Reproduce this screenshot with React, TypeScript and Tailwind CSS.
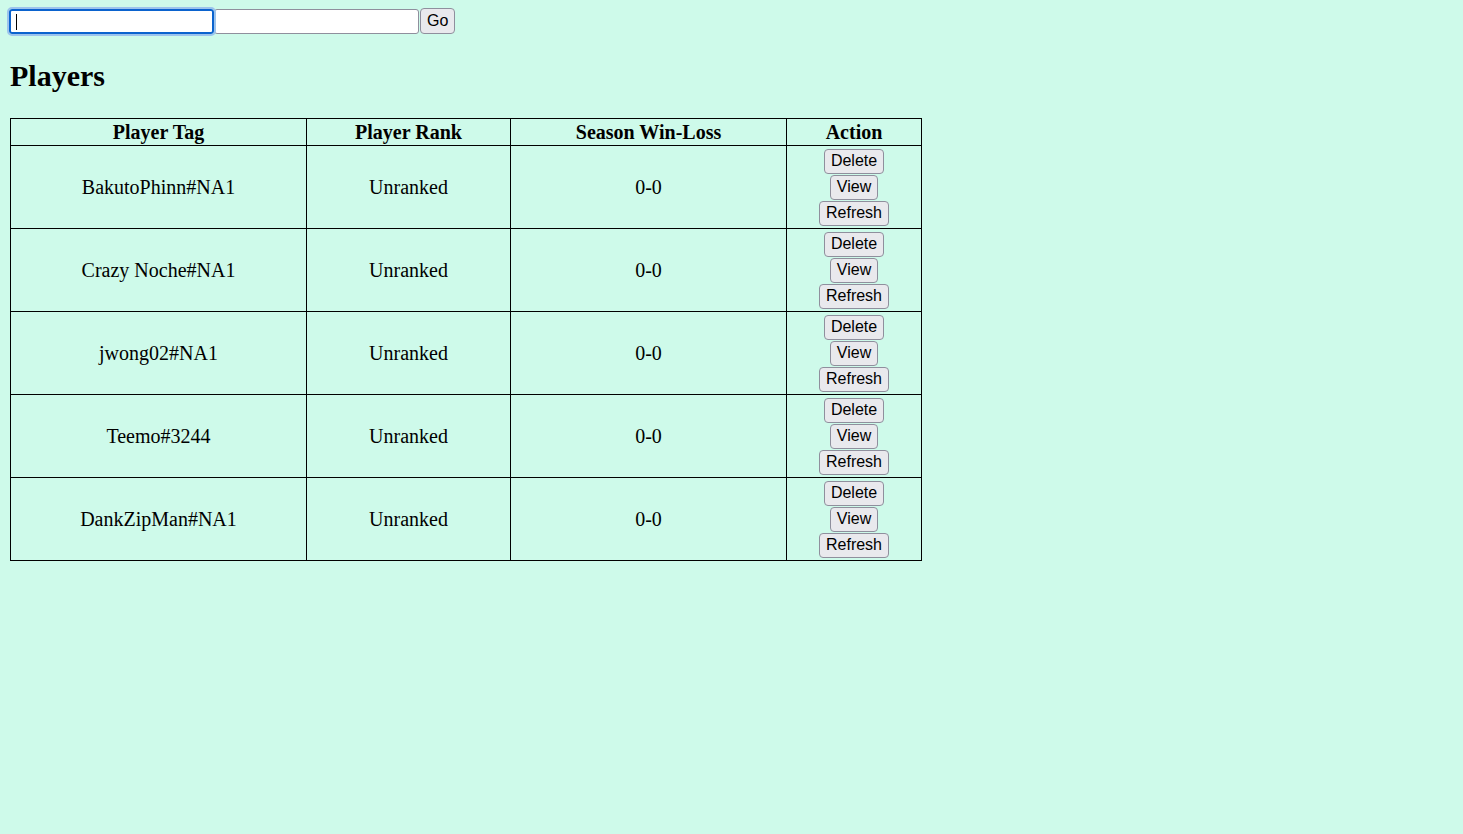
const players = [
  { tag: 'BakutoPhinn#NA1', rank: 'Unranked', record: '0-0' },
  { tag: 'Crazy Noche#NA1', rank: 'Unranked', record: '0-0' },
  { tag: 'jwong02#NA1', rank: 'Unranked', record: '0-0' },
  { tag: 'Teemo#3244', rank: 'Unranked', record: '0-0' },
  { tag: 'DankZipMan#NA1', rank: 'Unranked', record: '0-0' },
]

const btn =
  "h-[25px] px-[6px] rounded-[4px] border border-[#8f8f9d] bg-[#e9e9ed] text-black text-[16px] leading-[18px] font-['Liberation_Sans',Arial,sans-serif]"

export default function App() {
  return (
    <div className="min-h-screen bg-[#cefaea] px-[10px] pt-[8px] pb-[10px] text-black font-['Liberation_Serif','Times_New_Roman',serif]">
      {/* Search row */}
      <div className="flex items-center">
        <div className="relative">
          <input
            className="w-[205px] h-[25px] bg-white border-2 border-[#0b63ce] rounded-[3px] outline outline-2 outline-[#9cc3ec] outline-offset-0 -ml-px"
          />
          <span className="absolute left-[6px] top-[5px] w-px h-[16px] bg-black" />
        </div>
        <input className="w-[205px] h-[25px] bg-white border border-[#8f8f9d] rounded-[3px]" />
        <button className={btn + ' h-[26px] ml-px px-[5px]'}>Go</button>
      </div>

      <h2 className="text-[30px] font-bold leading-[34px] my-[25px]">Players</h2>

      <table className="table-fixed border-collapse w-[911px] text-[20px] leading-[23px]">
        <colgroup>
          <col className="w-[296px]" />
          <col className="w-[204px]" />
          <col className="w-[276px]" />
          <col className="w-[135px]" />
        </colgroup>
        <thead>
          <tr>
            {['Player Tag', 'Player Rank', 'Season Win-Loss', 'Action'].map(h => (
              <th key={h} className="border border-black font-bold text-center py-[1px] px-[1px] leading-[24px]">
                {h}
              </th>
            ))}
          </tr>
        </thead>
        <tbody>
          {players.map(p => (
            <tr key={p.tag} className="h-[83px]">
              <td className="border border-black text-center">{p.tag}</td>
              <td className="border border-black text-center">{p.rank}</td>
              <td className="border border-black text-center">{p.record}</td>
              <td className="border border-black text-center py-[2px]">
                <div className="flex flex-col items-center gap-[1px]">
                  <button className={btn}>Delete</button>
                  <button className={btn}>View</button>
                  <button className={btn}>Refresh</button>
                </div>
              </td>
            </tr>
          ))}
        </tbody>
      </table>
    </div>
  )
}
